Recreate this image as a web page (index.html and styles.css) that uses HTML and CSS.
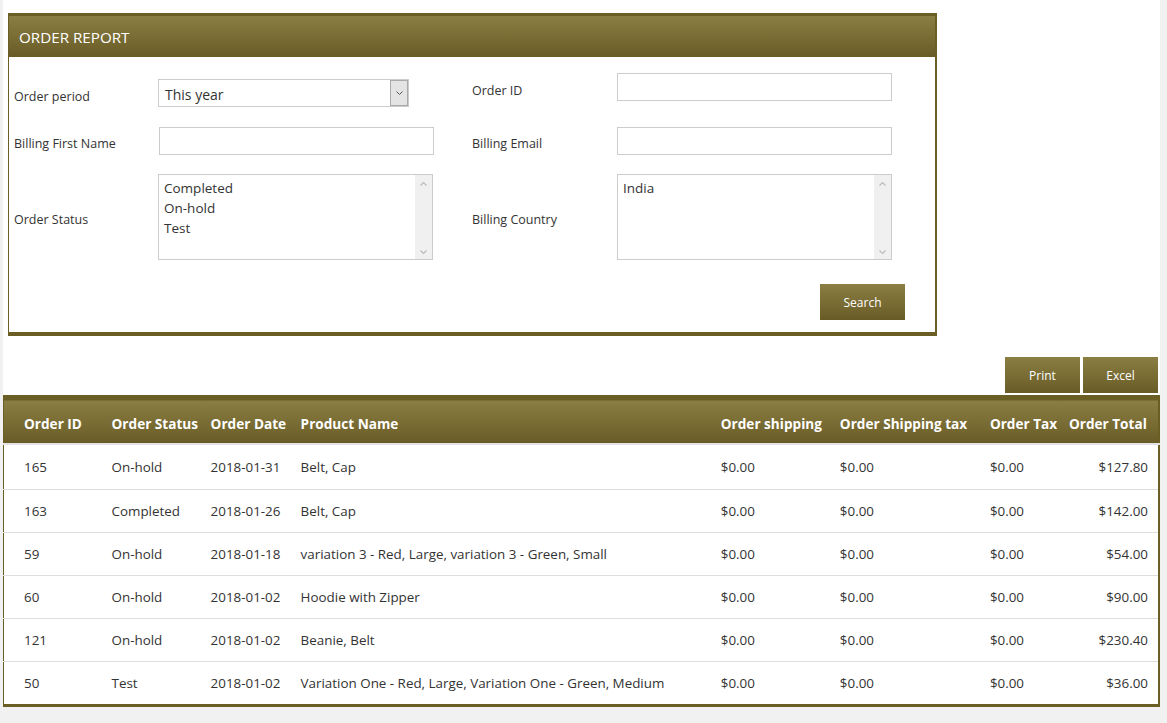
FILE: index.html
```html
<!DOCTYPE html>
<html>
<head>
<meta charset="utf-8">
<title>Order Report</title>
<link rel="stylesheet" href="styles.css">
</head>
<body>
<div class="wrap">
  <div class="panel">
    <div class="panel-head">ORDER REPORT</div>
    <div class="panel-body">
      <div class="form-grid">
        <label class="lbl lbl-period">Order period</label>
        <div class="select ctl-period">
          <span class="select-text">This year</span>
          <span class="select-btn"><svg width="9" height="6" viewBox="0 0 9 6"><path d="M1.5 1.5 L4.5 4.5 L7.5 1.5" fill="none" stroke="#555" stroke-width="1"/></svg></span>
        </div>
        <span></span>
        <label class="lbl lbl-orderid">Order ID</label>
        <input class="txt ctl-orderid" type="text">

        <label class="lbl">Billing First Name</label>
        <input class="txt ctl-first" type="text">
        <span></span>
        <label class="lbl">Billing Email</label>
        <input class="txt" type="text">

        <label class="lbl">Order Status</label>
        <div class="listbox ctl-status">
          <div class="list-items">
            <div>Completed</div>
            <div>On-hold</div>
            <div>Test</div>
          </div>
          <div class="scroll">
            <svg width="9" height="6" viewBox="0 0 9 6"><path d="M1.5 4.5 L4.5 1.5 L7.5 4.5" fill="none" stroke="#bbb" stroke-width="1.2"/></svg>
            <svg width="9" height="6" viewBox="0 0 9 6"><path d="M1.5 1.5 L4.5 4.5 L7.5 1.5" fill="none" stroke="#bbb" stroke-width="1.2"/></svg>
          </div>
        </div>
        <span></span>
        <label class="lbl">Billing Country</label>
        <div class="listbox ctl-country">
          <div class="list-items">
            <div>India</div>
          </div>
          <div class="scroll">
            <svg width="9" height="6" viewBox="0 0 9 6"><path d="M1.5 4.5 L4.5 1.5 L7.5 4.5" fill="none" stroke="#bbb" stroke-width="1.2"/></svg>
            <svg width="9" height="6" viewBox="0 0 9 6"><path d="M1.5 1.5 L4.5 4.5 L7.5 1.5" fill="none" stroke="#bbb" stroke-width="1.2"/></svg>
          </div>
        </div>
      </div>
      <div class="actions">
        <button class="btn btn-search">Search</button>
      </div>
    </div>
  </div>

  <div class="toolbar">
    <button class="btn btn-tool">Print</button>
    <button class="btn btn-tool">Excel</button>
  </div>

  <table class="report">
    <colgroup>
      <col class="c1"><col class="c2"><col class="c3"><col class="c4"><col class="c5"><col class="c6"><col class="c7"><col class="c8">
    </colgroup>
    <thead>
      <tr>
        <th>Order ID</th><th>Order Status</th><th>Order Date</th><th>Product Name</th><th>Order shipping</th><th>Order Shipping tax</th><th>Order Tax</th><th>Order Total</th>
      </tr>
    </thead>
    <tbody>
      <tr><td>165</td><td>On-hold</td><td>2018-01-31</td><td>Belt, Cap</td><td>$0.00</td><td>$0.00</td><td>$0.00</td><td class="num">$127.80</td></tr>
      <tr><td>163</td><td>Completed</td><td>2018-01-26</td><td>Belt, Cap</td><td>$0.00</td><td>$0.00</td><td>$0.00</td><td class="num">$142.00</td></tr>
      <tr><td>59</td><td>On-hold</td><td>2018-01-18</td><td>variation 3 - Red, Large, variation 3 - Green, Small</td><td>$0.00</td><td>$0.00</td><td>$0.00</td><td class="num">$54.00</td></tr>
      <tr><td>60</td><td>On-hold</td><td>2018-01-02</td><td>Hoodie with Zipper</td><td>$0.00</td><td>$0.00</td><td>$0.00</td><td class="num">$90.00</td></tr>
      <tr><td>121</td><td>On-hold</td><td>2018-01-02</td><td>Beanie, Belt</td><td>$0.00</td><td>$0.00</td><td>$0.00</td><td class="num">$230.40</td></tr>
      <tr><td>50</td><td>Test</td><td>2018-01-02</td><td>Variation One - Red, Large, Variation One - Green, Medium</td><td>$0.00</td><td>$0.00</td><td>$0.00</td><td class="num">$36.00</td></tr>
    </tbody>
  </table>
</div>
</body>
</html>
```
FILE: styles.css
```css
html, body {
  margin: 0;
  padding: 0;
  background: #f1f1f1;
}
body {
  font-family: "Open Sans", "Noto Sans", "Liberation Sans", sans-serif;
  font-size: 13px;
  color: #333;
}
.wrap {
  margin-left: 3px;
  width: 1157px;
  background: #fff;
  padding-top: 13px;
}
.panel {
  margin-left: 5px;
  width: 926px;
  border: 1px solid #6b5e25;
  border-top: 3px solid #6b5e25;
  border-bottom: 4px solid #6b5e25;
  border-right-width: 2px;
}
.panel-head {
  height: 41px;
  line-height: 43px;
  padding-left: 10px;
  color: #fff;
  font-size: 15.2px;
  background: linear-gradient(#8b7e43, #685b26);
}
.panel-body {
  padding: 16px 0 12px 5px;
}
.form-grid {
  display: grid;
  grid-template-columns: 144px 275px 39px 145px 275px;
  grid-template-rows: 34px 27px 85px;
  row-gap: 20px;
  align-items: center;
}
.lbl {
  font-size: 12.5px;
  color: #333;
  margin-top: 6px;
}
.lbl-period { align-self: end; margin-bottom: 2px; }
.lbl-orderid { align-self: start; margin-top: 9px; }
.txt {
  box-sizing: border-box;
  width: 275px;
  height: 28px;
  border: 1px solid #ccc;
  margin: 0;
  padding: 0 6px;
  font: inherit;
}
.ctl-orderid { align-self: start; }
.ctl-first { margin-left: 1px; }
.select {
  box-sizing: border-box;
  align-self: end;
  width: 251px;
  height: 28px;
  border: 1px solid #ccc;
  display: flex;
  align-items: stretch;
}
.select-text {
  flex: 1;
  padding: 2px 0 0 6px;
  font-size: 14px;
  line-height: 26px;
}
.select-btn {
  width: 16px;
  border: 1px solid #aaa;
  background: #e4e4e4;
  display: flex;
  align-items: center;
  justify-content: center;
}
.listbox {
  box-sizing: border-box;
  width: 275px;
  height: 86px;
  border: 1px solid #ccc;
  display: flex;
}
.list-items {
  flex: 1;
  padding: 3px 5px;
  font-size: 13.5px;
  line-height: 20px;
}
.scroll {
  width: 17px;
  background: #f0f0f0;
  display: flex;
  flex-direction: column;
  justify-content: space-between;
  align-items: center;
  padding: 6px 0 4px;
}
.actions {
  display: flex;
  justify-content: flex-end;
  padding-right: 30px;
  margin-top: 25px;
}
.btn {
  border: none;
  color: #fff;
  font-family: inherit;
  font-size: 12px;
  background: linear-gradient(#8b7e43, #685b26);
  cursor: pointer;
}
.btn-search {
  width: 85px;
  height: 36px;
}
.toolbar {
  display: flex;
  justify-content: flex-end;
  gap: 3px;
  margin-top: 21px;
  padding-right: 2px;
  margin-bottom: 2px;
}
.btn-tool {
  width: 75px;
  height: 36px;
}
.report {
  width: 1157px;
  border-collapse: collapse;
  table-layout: fixed;
  border-left: 1px solid #6b5e25;
  border-right: 2px solid #6b5e25;
  border-top: 5px solid #6b5e25;
  border-bottom: 3px solid #6b5e25;
}
.c1 { width: 100px; }
.c2 { width: 99px; }
.c3 { width: 90px; }
.c4 { width: 420px; }
.c5 { width: 119px; }
.c6 { width: 150px; }
.c7 { width: 79px; }
.c8 { width: 98px; }
.report th {
  height: 40px;
  padding: 3px 8px 0;
  text-align: left;
  color: #fff;
  font-size: 13.6px;
  font-weight: 700;
  white-space: nowrap;
  background: linear-gradient(#8b7e43, #685b26);
  border-bottom: 2px solid #e2e2e2;
}
.report td {
  height: 42px;
  padding: 0 8px;
  font-size: 13.4px;
  color: #333;
  white-space: nowrap;
  border-top: 1px solid #dedede;
}
.report tbody tr:first-child td { border-top: none; height: 44px; }
.report th:first-child, .report td:first-child { padding-left: 20px; }
.report .num { text-align: right; padding-right: 10px; }
```
